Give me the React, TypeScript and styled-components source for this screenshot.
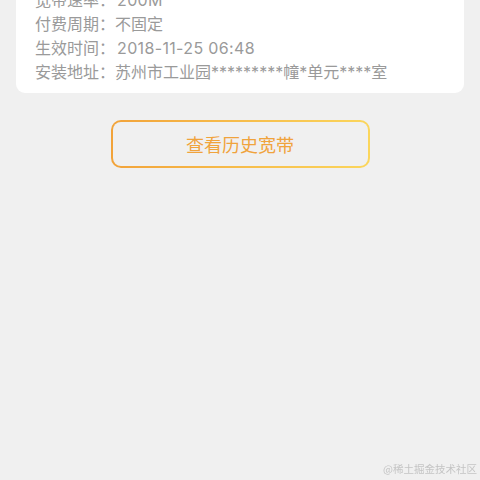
import React from "react";
import styled, { createGlobalStyle } from "styled-components";

const GlobalStyle = createGlobalStyle`
  html, body {
    margin: 0;
    padding: 0;
    background: #f0f0f0;
    font-family: "Inter", "Noto Sans CJK SC", sans-serif;
  }
  body {
    min-height: 480px;
  }
`;

const details = [
  { label: "宽带速率", value: "200M", numeric: true },
  { label: "付费周期", value: "不固定", numeric: false },
  { label: "生效时间", value: "2018-11-25 06:48", numeric: true },
  { label: "安装地址", value: "苏州市工业园*********幢*单元****室", numeric: false },
];

function App() {
  return (
    <>
      <GlobalStyle />
      <StPage>
        <StCard>
          {details.map((item) => (
            <StRow key={item.label}>
              {item.label}：<StValue $numeric={item.numeric}>{item.value}</StValue>
            </StRow>
          ))}
        </StCard>
        <StBtnWrap>
          <StBtn>查看历史宽带</StBtn>
        </StBtnWrap>
      </StPage>
      <StMark>@稀土掘金技术社区</StMark>
    </>
  );
}

export default App;

const StPage = styled.div`
  display: flex;
  flex-direction: column;
  padding: 0 16px;
  margin-top: -22px;
`;

const StCard = styled.div`
  background: #ffffff;
  border-radius: 9px;
  padding: 10px 19px 9px;
  width: 448px;
  box-sizing: border-box;
`;

const StRow = styled.div`
  font-size: 16px;
  line-height: 24px;
  color: #9a9a9a;
  white-space: nowrap;
`;

const StValue = styled.span<{ $numeric: boolean }>`
  letter-spacing: ${(p) => (p.$numeric ? "0.35px" : "0")};
  margin-left: ${(p) => (p.$numeric ? "2px" : "0")};
`;

const StBtnWrap = styled.div`
  display: flex;
  justify-content: center;
  margin-top: 27px;
`;

const StBtn = styled.button`
  width: 259px;
  height: 48px;
  border: 2px solid transparent;
  border-radius: 10px;
  background: linear-gradient(#f0f0f0, #f0f0f0) padding-box,
    linear-gradient(90deg, #f2a33a, #fbd65c) border-box;
  color: #f0a33c;
  font-family: "Noto Sans CJK SC", sans-serif;
  font-size: 18px;
  cursor: pointer;
  padding: 0;
`;

const StMark = styled.div`
  position: fixed;
  right: 3px;
  bottom: 4px;
  font-size: 10.5px;
  color: #c4c4c4;
  font-family: "Noto Sans CJK SC", sans-serif;
`;
